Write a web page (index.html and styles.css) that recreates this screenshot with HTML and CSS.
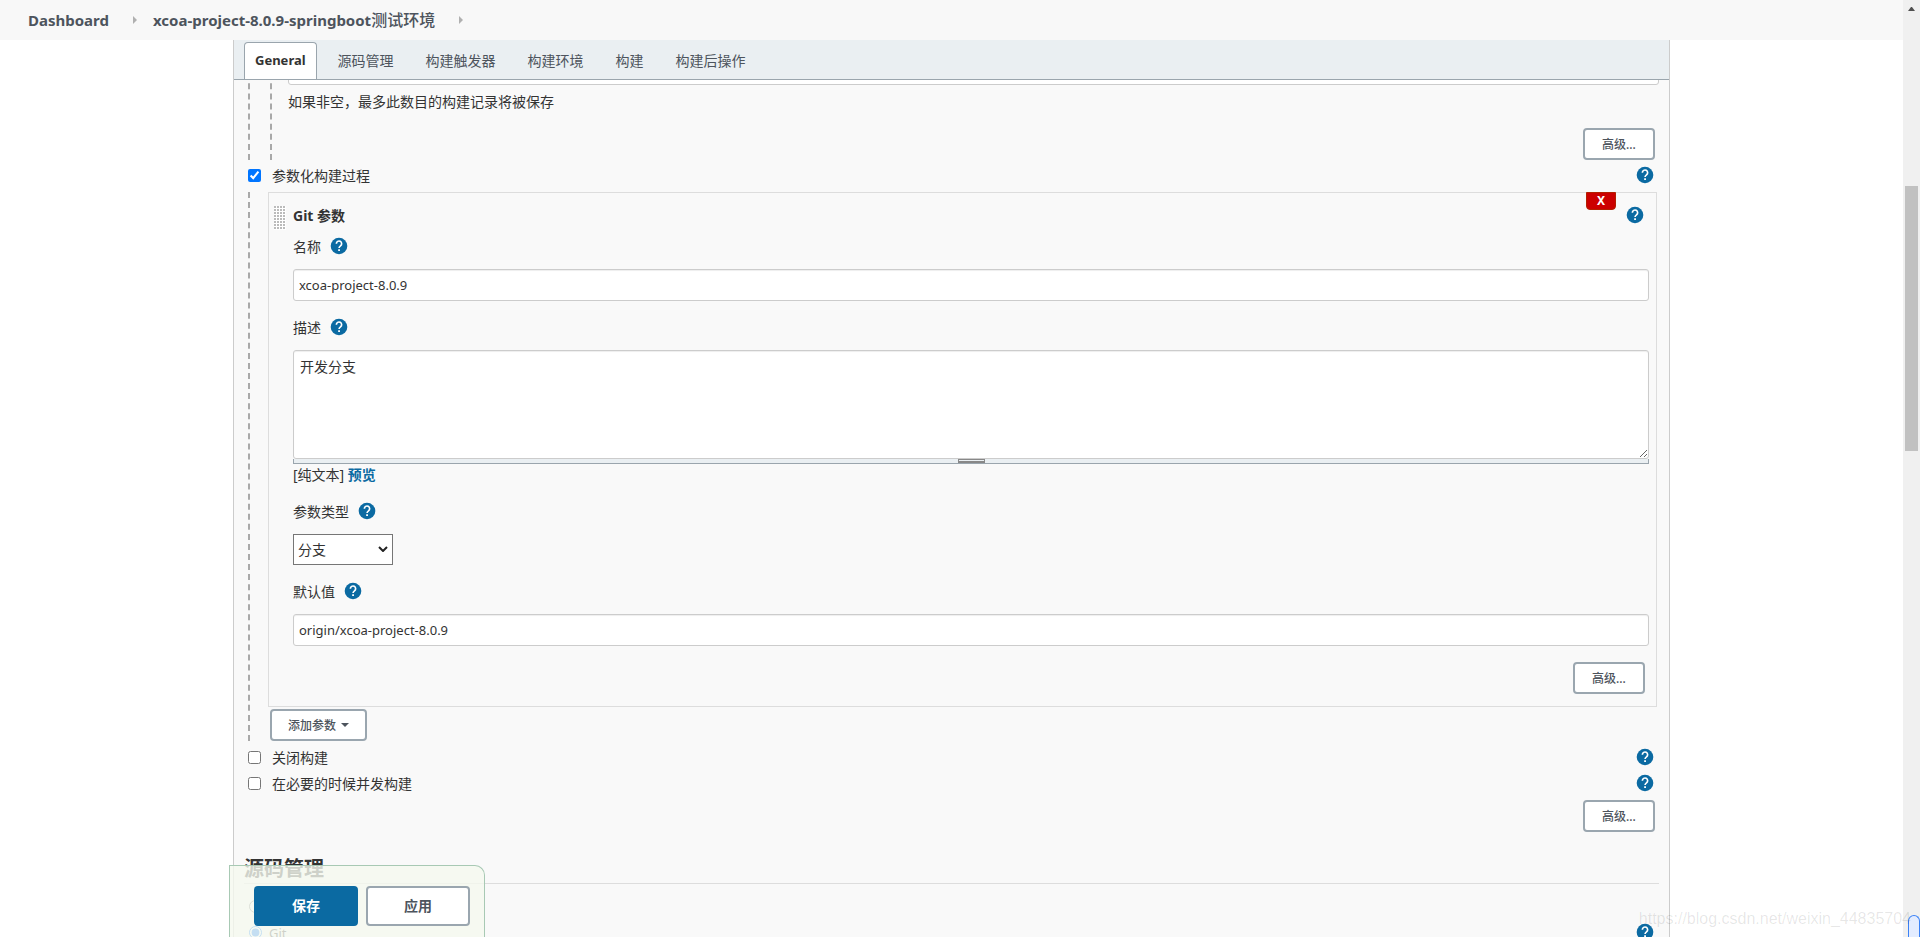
FILE: index.html
```html
<!DOCTYPE html>
<html lang="zh-CN">
<head>
<meta charset="utf-8">
<title>xcoa-project-8.0.9-springboot测试环境 Config</title>
<link rel="stylesheet" href="styles.css">
</head>
<body>
<svg class="sprite" aria-hidden="true">
  <symbol id="help" viewBox="-1 -1 26 26">
    <path d="M12 0a12 12 0 1 0 0 24a12 12 0 0 0 0-24z" fill="#0b6aa2"/>
    <path d="M8.2 8.6a3.8 3.800 0 1 1 6 3.100c-1.300 1-2.100 1.600-2.100 3.300" fill="none" stroke="#fff" stroke-width="2.400"/>
    <path d="M10.800 16.800h2.600v2.600h-2.600z" fill="#fff"/>
  </symbol>
</svg>
<div class="window">
  <div class="page">
    <nav class="breadcrumbs">
      <a href="#">Dashboard</a><span class="arrow"></span>
      <a href="#">xcoa-project-8.0.9-springboot<span class="han">测试环境</span></a><span class="arrow"></span>
    </nav>
    <main class="panel">
      <nav class="tabs">
        <a class="tab tab-active" href="#">General</a>
        <a class="tab" href="#">源码管理</a>
        <a class="tab" href="#">构建触发器</a>
        <a class="tab" href="#">构建环境</a>
        <a class="tab" href="#">构建</a>
        <a class="tab" href="#">构建后操作</a>
      </nav>
      <form class="config">
        <section class="nested">
          <div class="nested nested-inner">
            <input class="text-input scrolled" id="keep" type="text" aria-label="保持构建的最大个数">
            <p class="description">如果非空，最多此数目的构建记录将被保存</p>
            <div class="actions"><button class="button" type="button">高级...</button></div>
          </div>
        </section>

        <div class="option option-lead">
          <input type="checkbox" id="parameterized" checked>
          <label for="parameterized">参数化构建过程</label>
          <button class="help" type="button" aria-label="帮助"><svg><use href="#help"/></svg></button>
        </div>

        <section class="nested">
          <div class="parameter">
            <span class="drag"></span>
            <button class="remove" type="button">X</button>
            <div class="parameter-title">
              <strong>Git 参数</strong>
              <button class="help" type="button" aria-label="帮助"><svg><use href="#help"/></svg></button>
            </div>
            <div class="fields">
              <div class="field">
                <div class="field-label"><label for="name">名称</label><button class="help" type="button" aria-label="帮助"><svg><use href="#help"/></svg></button></div>
                <input class="text-input" id="name" type="text" value="xcoa-project-8.0.9">
              </div>
              <div class="field">
                <div class="field-label"><label for="desc">描述</label><button class="help" type="button" aria-label="帮助"><svg><use href="#help"/></svg></button></div>
                <div>
                  <textarea class="text-area" id="desc">开发分支</textarea>
                  <div class="resizer"><span class="grip"></span></div>
                  <p class="markup">[纯文本] <a href="#">预览</a></p>
                </div>
              </div>
              <div class="field">
                <div class="field-label"><label for="type">参数类型</label><button class="help" type="button" aria-label="帮助"><svg><use href="#help"/></svg></button></div>
                <div class="select-wrap">
                  <select class="select" id="type"><option>分支</option></select>
                  <svg class="chevron" viewBox="0 0 10 6"><path d="M1 1l4 4l4-4" fill="none" stroke="#222" stroke-width="2"/></svg>
                </div>
              </div>
              <div class="field">
                <div class="field-label"><label for="default">默认值</label><button class="help" type="button" aria-label="帮助"><svg><use href="#help"/></svg></button></div>
                <input class="text-input" id="default" type="text" value="origin/xcoa-project-8.0.9">
              </div>
              <div class="actions"><button class="button" type="button">高级...</button></div>
            </div>
          </div>
          <button class="button add" type="button">添加参数<span class="caret"></span></button>
        </section>

        <div class="options">
          <div class="option">
            <input type="checkbox" id="disable">
            <label for="disable">关闭构建</label>
            <button class="help" type="button" aria-label="帮助"><svg><use href="#help"/></svg></button>
          </div>
          <div class="option">
            <input type="checkbox" id="concurrent">
            <label for="concurrent">在必要的时候并发构建</label>
            <button class="help" type="button" aria-label="帮助"><svg><use href="#help"/></svg></button>
          </div>
        </div>
        <div class="actions"><button class="button" type="button">高级...</button></div>

        <h2 class="section-title">源码管理</h2>
        <div class="choices">
          <div class="option">
            <input type="radio" name="scm" id="none">
            <label for="none">无</label>
          </div>
          <div class="option">
            <input type="radio" name="scm" id="git" checked>
            <label for="git">Git</label>
            <button class="help" type="button" aria-label="帮助"><svg><use href="#help"/></svg></button>
          </div>
        </div>
      </form>
    </main>
    <div class="save-bar">
      <button class="save primary" type="submit">保存</button>
      <button class="save" type="button">应用</button>
    </div>
  </div>
  <div class="scrollbar">
    <svg class="scroll-up" viewBox="0 0 7 4"><path d="M0 4L3 0h1L7 4z" fill="#505050"/></svg>
    <div class="thumb"></div>
  </div>
  <span class="corner"></span>
  <span class="watermark">https://blog.csdn.net/weixin_44835704</span>
</div>
</body>
</html>
```
FILE: styles.css
```css
* { box-sizing: border-box; }

body {
  margin: 0;
  color: #333;
  background: #fff;
  font: 14px/20px "Noto Sans", "Noto Sans CJK SC", sans-serif;
}

a { color: inherit; text-decoration: none; }
p { margin: 0; }
button, input, textarea, select { margin: 0; color: inherit; font: inherit; }
.sprite { display: none; }

.window {
  position: relative;
  display: grid;
  grid-template-columns: 1fr 17px;
  height: 100vh;
  overflow: hidden;
}

.page {
  position: relative;
  display: flex;
  flex-direction: column;
  min-width: 0;
  min-height: 0;
  overflow: hidden;
}

.breadcrumbs {
  display: flex;
  flex: none;
  align-items: center;
  height: 40px;
  padding: 0 28px;
  background: #f8f8f8;
  color: #4d545d;
  font-size: 15px;
  font-weight: 700;
}

.han { font-size: 16px; font-weight: 500; }

.arrow {
  margin: 0 16px 0 24px;
  border-left: 4px solid #b0b0b0;
  border-top: 4px solid transparent;
  border-bottom: 4px solid transparent;
}

.panel {
  flex: none;
  margin: 0 233px;
  border: 1px solid #ccc;
  border-width: 0 1px;
  background: #f9f9f9;
}

.tabs {
  display: flex;
  align-items: flex-end;
  gap: 10px;
  height: 40px;
  padding: 0 10px;
  border-bottom: 1px solid #9aa5ad;
  background: #eaeff2;
}

.tab {
  height: 37px;
  padding: 0 10px;
  border: 1px solid transparent;
  border-bottom: 0;
  color: #4d545d;
  line-height: 35px;
}

.tab-active {
  border-color: #9aa5ad;
  border-radius: 4px 4px 0 0;
  background: #fff;
  color: #333;
  font-size: 13px;
  font-weight: 700;
}

.config {
  padding: 0 10px;
  overflow: hidden;
}

.nested {
  margin-left: 4px;
  padding-left: 18px;
  border-left: 2px dashed #a9a9a9;
}

.nested-inner { margin-left: 2px; padding-left: 16px; }
.scrolled { margin-top: -27px; }
.description { margin: 7px 0 16px; }

.text-input {
  display: block;
  width: 100%;
  height: 32px;
  padding: 0 5px;
  border: 1px solid #ccc;
  border-radius: 3px;
  background: #fff;
  box-shadow: inset 0 1px 1px #eee;
  font-size: 13px;
}

.actions { display: flex; justify-content: flex-end; padding-right: 4px; }

.button {
  height: 32px;
  padding: 2px 16px 0;
  border: 2px solid #9aa6af;
  border-radius: 4px;
  background: #fff;
  color: #4d545d;
  font-size: 12px;
  font-weight: 500;
}

.actions .button { min-width: 72px; }

.options { padding: 3px 0 4px; }

.option {
  display: flex;
  align-items: center;
  height: 26px;
  padding: 0 5px 0 4px;
}

.option-lead { margin: 2px 0 4px; }
.option input { flex: none; width: 13px; height: 13px; }
.option label { margin-left: 11px; padding-top: 2px; }
.option .help { margin-left: auto; }

.help {
  flex: none;
  width: 18px;
  height: 18px;
  padding: 0;
  border: 0;
  background: none;
}

.help svg { display: block; width: 18px; height: 18px; }

.parameter {
  position: relative;
  margin-right: 2px;
  padding: 13px 7px 12px 24px;
  border: 1px solid #ddd;
}

.drag {
  position: absolute;
  left: 5px;
  top: 13px;
  width: 12px;
  height: 24px;
  background: radial-gradient(circle at 1px 1px, #bbb 1px, #fff 1px) 0 0 / 3px 3px;
}

.remove {
  position: absolute;
  top: -1px;
  right: 40px;
  width: 30px;
  height: 18px;
  padding: 0;
  border: 1px solid #b32000;
  border-radius: 0 0 4px 4px;
  background: #c00;
  color: #fff;
  font-size: 12px;
  font-weight: 700;
  line-height: 16px;
}

.parameter-title {
  display: flex;
  justify-content: space-between;
  padding-right: 5px;
  margin-bottom: 10px;
}

.fields { display: flex; flex-direction: column; gap: 16px; }
.field { display: flex; flex-direction: column; gap: 13px; }
.field-label { display: flex; align-items: center; gap: 9px; height: 20px; }
.field-label label { padding-top: 2px; }

.text-area {
  display: block;
  width: 100%;
  height: 109px;
  padding: 6px;
  border: 1px solid #ccc;
  border-radius: 3px;
  background: #fff;
  box-shadow: inset 0 1px 1px #eee;
}

.resizer {
  display: flex;
  justify-content: center;
  height: 5px;
  border: 1px solid #9aa5ad;
  border-top: 0;
  background: #eaeff2;
}

.grip { width: 27px; height: 4px; border: 1px solid #888; border-bottom-width: 2px; }
.markup { margin-top: 1px; }
.markup a { color: #0b6aa2; font-weight: 700; }

.select-wrap { position: relative; width: 100px; }

.select {
  display: block;
  width: 100%;
  height: 31px;
  padding: 0 4px;
  border: 1px solid #767676;
  border-radius: 0;
  background: #fff;
  appearance: none;
}

.chevron {
  position: absolute;
  top: 12px;
  right: 5px;
  width: 10px;
  height: 6px;
  pointer-events: none;
}

.add { display: block; margin: 2px 0 0 2px; }

.caret {
  display: inline-block;
  margin-left: 5px;
  vertical-align: 3px;
  border-top: 4px solid #4d545d;
  border-left: 4px solid transparent;
  border-right: 4px solid transparent;
}

.section-title {
  margin: 23px 0 0;
  border-bottom: 1px solid #ddd;
  font-size: 20px;
  font-weight: 700;
  line-height: 28px;
}

.choices { padding: 9px 0 20px 1px; }
.choices label { margin-left: 7px; font-size: 13px; }

.save-bar {
  position: absolute;
  left: 229px;
  bottom: 0;
  display: flex;
  gap: 8px;
  padding: 20px 14px 11px 24px;
  border: 1px solid #a8c9b4;
  border-bottom: 0;
  border-radius: 0 10px 0 0;
  background: rgba(245, 249, 239, 0.8);
}

.save {
  width: 104px;
  height: 40px;
  border: 2px solid #9aa6af;
  border-radius: 4px;
  background: #fff;
  color: #4d545d;
  font-weight: 700;
}

.primary { border-color: #0b6aa2; background: #0b6aa2; color: #fff; }

.scrollbar {
  display: flex;
  flex-direction: column;
  align-items: center;
  background: #f0f0f0;
}

.scroll-up { width: 7px; height: 4px; margin: 7px 0 175px; }
.thumb { width: 13px; height: 265px; background: #c1c1c1; }

.watermark {
  position: absolute;
  right: 9px;
  bottom: 7px;
  color: rgba(0, 0, 0, 0.1);
  font: 16px/22px "Liberation Sans", sans-serif;
}

.corner {
  position: absolute;
  right: 0;
  bottom: 0;
  width: 12px;
  height: 22px;
  border: 1px solid #3b82f6;
  border-width: 1px 1px 0;
  border-radius: 6px 6px 0 0;
  background: #e3ecff;
}
```
